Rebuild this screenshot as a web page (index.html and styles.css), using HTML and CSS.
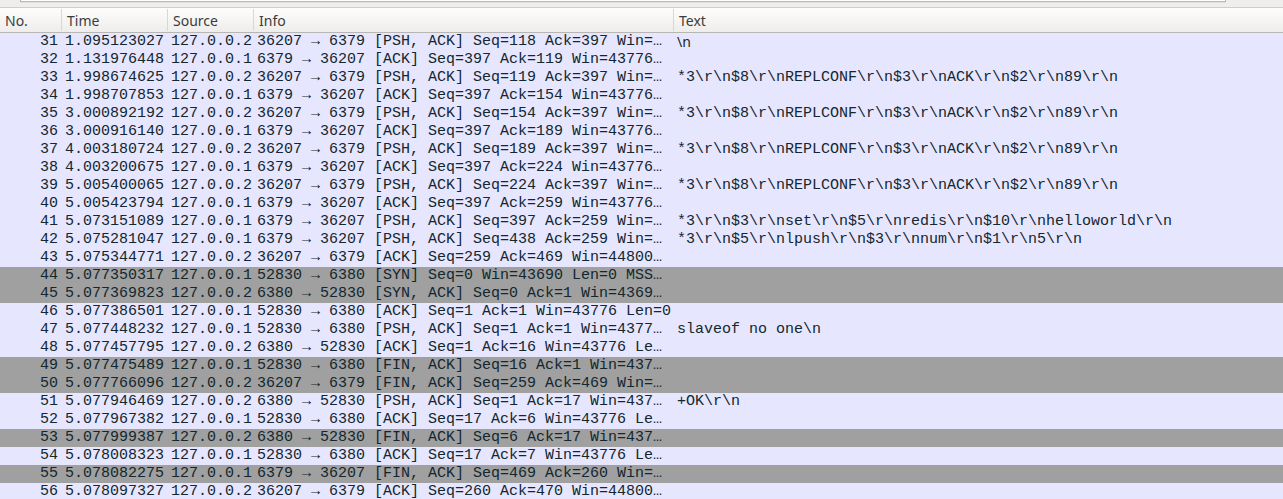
FILE: index.html
```html
<!DOCTYPE html>
<html>
<head>
<meta charset="utf-8">
<link rel="stylesheet" href="styles.css">
</head>
<body>
<div class="top"><div class="filter"></div></div>
<div class="list">
  <div class="head">
    <div class="hc">No.</div>
    <div class="hc">Time</div>
    <div class="hc">Source</div>
    <div class="hc">Info</div>
    <div class="hc last">Text</div>
  </div>
  <div class="row tcp"><span class="no">31</span><span>1.095123027</span><span>127.0.0.2</span><span>36207 → 6379 [PSH, ACK] Seq=118 Ack=397 Win=…</span><span class="sans">\n</span></div>
  <div class="row tcp"><span class="no">32</span><span>1.131976448</span><span>127.0.0.1</span><span>6379 → 36207 [ACK] Seq=397 Ack=119 Win=43776…</span><span></span></div>
  <div class="row tcp"><span class="no">33</span><span>1.998674625</span><span>127.0.0.2</span><span>36207 → 6379 [PSH, ACK] Seq=119 Ack=397 Win=…</span><span>*3\r\n$8\r\nREPLCONF\r\n$3\r\nACK\r\n$2\r\n89\r\n</span></div>
  <div class="row tcp"><span class="no">34</span><span>1.998707853</span><span>127.0.0.1</span><span>6379 → 36207 [ACK] Seq=397 Ack=154 Win=43776…</span><span></span></div>
  <div class="row tcp"><span class="no">35</span><span>3.000892192</span><span>127.0.0.2</span><span>36207 → 6379 [PSH, ACK] Seq=154 Ack=397 Win=…</span><span>*3\r\n$8\r\nREPLCONF\r\n$3\r\nACK\r\n$2\r\n89\r\n</span></div>
  <div class="row tcp"><span class="no">36</span><span>3.000916140</span><span>127.0.0.1</span><span>6379 → 36207 [ACK] Seq=397 Ack=189 Win=43776…</span><span></span></div>
  <div class="row tcp"><span class="no">37</span><span>4.003180724</span><span>127.0.0.2</span><span>36207 → 6379 [PSH, ACK] Seq=189 Ack=397 Win=…</span><span>*3\r\n$8\r\nREPLCONF\r\n$3\r\nACK\r\n$2\r\n89\r\n</span></div>
  <div class="row tcp"><span class="no">38</span><span>4.003200675</span><span>127.0.0.1</span><span>6379 → 36207 [ACK] Seq=397 Ack=224 Win=43776…</span><span></span></div>
  <div class="row tcp"><span class="no">39</span><span>5.005400065</span><span>127.0.0.2</span><span>36207 → 6379 [PSH, ACK] Seq=224 Ack=397 Win=…</span><span>*3\r\n$8\r\nREPLCONF\r\n$3\r\nACK\r\n$2\r\n89\r\n</span></div>
  <div class="row tcp"><span class="no">40</span><span>5.005423794</span><span>127.0.0.1</span><span>6379 → 36207 [ACK] Seq=397 Ack=259 Win=43776…</span><span></span></div>
  <div class="row tcp"><span class="no">41</span><span>5.073151089</span><span>127.0.0.1</span><span>6379 → 36207 [PSH, ACK] Seq=397 Ack=259 Win=…</span><span>*3\r\n$3\r\nset\r\n$5\r\nredis\r\n$10\r\nhelloworld\r\n</span></div>
  <div class="row tcp"><span class="no">42</span><span>5.075281047</span><span>127.0.0.1</span><span>6379 → 36207 [PSH, ACK] Seq=438 Ack=259 Win=…</span><span>*3\r\n$5\r\nlpush\r\n$3\r\nnum\r\n$1\r\n5\r\n</span></div>
  <div class="row tcp"><span class="no">43</span><span>5.075344771</span><span>127.0.0.2</span><span>36207 → 6379 [ACK] Seq=259 Ack=469 Win=44800…</span><span></span></div>
  <div class="row syn"><span class="no">44</span><span>5.077350317</span><span>127.0.0.1</span><span>52830 → 6380 [SYN] Seq=0 Win=43690 Len=0 MSS…</span><span></span></div>
  <div class="row syn"><span class="no">45</span><span>5.077369823</span><span>127.0.0.2</span><span>6380 → 52830 [SYN, ACK] Seq=0 Ack=1 Win=4369…</span><span></span></div>
  <div class="row tcp"><span class="no">46</span><span>5.077386501</span><span>127.0.0.1</span><span>52830 → 6380 [ACK] Seq=1 Ack=1 Win=43776 Len=0</span><span></span></div>
  <div class="row tcp"><span class="no">47</span><span>5.077448232</span><span>127.0.0.1</span><span>52830 → 6380 [PSH, ACK] Seq=1 Ack=1 Win=4377…</span><span>slaveof no one\n</span></div>
  <div class="row tcp"><span class="no">48</span><span>5.077457795</span><span>127.0.0.2</span><span>6380 → 52830 [ACK] Seq=1 Ack=16 Win=43776 Le…</span><span></span></div>
  <div class="row syn"><span class="no">49</span><span>5.077475489</span><span>127.0.0.1</span><span>52830 → 6380 [FIN, ACK] Seq=16 Ack=1 Win=437…</span><span></span></div>
  <div class="row syn"><span class="no">50</span><span>5.077766096</span><span>127.0.0.2</span><span>36207 → 6379 [FIN, ACK] Seq=259 Ack=469 Win=…</span><span></span></div>
  <div class="row tcp"><span class="no">51</span><span>5.077946469</span><span>127.0.0.2</span><span>6380 → 52830 [PSH, ACK] Seq=1 Ack=17 Win=437…</span><span>+OK\r\n</span></div>
  <div class="row tcp"><span class="no">52</span><span>5.077967382</span><span>127.0.0.1</span><span>52830 → 6380 [ACK] Seq=17 Ack=6 Win=43776 Le…</span><span></span></div>
  <div class="row syn"><span class="no">53</span><span>5.077999387</span><span>127.0.0.2</span><span>6380 → 52830 [FIN, ACK] Seq=6 Ack=17 Win=437…</span><span></span></div>
  <div class="row tcp"><span class="no">54</span><span>5.078008323</span><span>127.0.0.1</span><span>52830 → 6380 [ACK] Seq=17 Ack=7 Win=43776 Le…</span><span></span></div>
  <div class="row syn"><span class="no">55</span><span>5.078082275</span><span>127.0.0.1</span><span>6379 → 36207 [FIN, ACK] Seq=469 Ack=260 Win=…</span><span></span></div>
  <div class="row tcp"><span class="no">56</span><span>5.078097327</span><span>127.0.0.2</span><span>36207 → 6379 [ACK] Seq=260 Ack=470 Win=44800…</span><span></span></div>
</div>
</body>
</html>
```
FILE: styles.css
```css
html, body {
  margin: 0;
  padding: 0;
  background: #ffffff;
  overflow: hidden;
}
.top {
  height: 7px;
  background: #efeeec;
  border-bottom: 1px solid #cfcdca;
  position: relative;
}
.filter {
  margin-left: 20px;
  width: 1204px;
  height: 1px;
  background: #ffffff;
  border: 1px solid #b9b7b3;
  border-top: none;
  box-shadow: 0 1px 1px rgba(0,0,0,0.06);
}
.head {
  display: grid;
  grid-template-columns: 62px 106px 86px 420px 1fr;
  height: 24px;
  background: linear-gradient(#fdfdfc, #eeedeb);
  border-bottom: 1px solid #b8b6b2;
  font-family: "Noto Sans", "Open Sans", sans-serif;
  font-size: 14px;
  color: #3c3c3c;
}
.hc {
  display: flex;
  align-items: center;
  padding-left: 5px;
  border-right: 1px solid #d9d7d4;
  margin: 1px 0;
}
.hc.last {
  border-right: none;
}
.row {
  display: grid;
  grid-template-columns: 62px 106px 86px 420px 1fr;
  height: 18px;
  line-height: 18px;
  font-family: "Liberation Mono", "DejaVu Sans Mono", monospace;
  font-size: 15px;
  color: #12272e;
  white-space: pre;
  overflow: hidden;
}
.row span {
  padding-left: 3px;
  overflow: hidden;
}
.row .no {
  text-align: right;
  padding-left: 0;
  padding-right: 4px;
}
.row .sans {
  font-family: "Noto Sans", "Open Sans", sans-serif;
  font-size: 14px;
}
.tcp {
  background: #e7e6ff;
}
.syn {
  background: #a0a0a0;
}
```
